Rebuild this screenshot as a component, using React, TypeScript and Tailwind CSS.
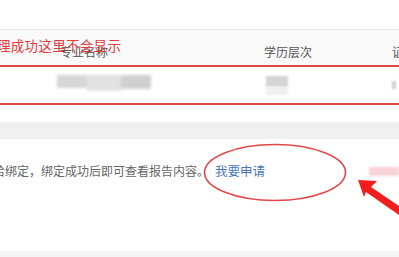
import React from 'react';

const font = { fontFamily: '"Noto Sans CJK SC", "Noto Sans", sans-serif' };

const App: React.FC = () => {
    return (
        <div className="relative w-[399px] h-[257px] overflow-hidden bg-white" style={font}>
            <div className="h-[29px]" />

            {/* table */}
            <div className="border-t border-[#e6e6e6]">
                <div className="flex items-center h-[35px] bg-[#f9f9f9] text-[12px] text-[#555] whitespace-nowrap">
                    <div className="w-[264px] shrink-0 pl-[60px] pt-[8px]">专业名称</div>
                    <div className="w-[128px] shrink-0 pt-[8px]">学历层次</div>
                    <div className="shrink-0 pt-[8px]">证书</div>
                </div>
                <div className="flex items-center h-[40px] border-y-2 border-[#e04848] bg-white">
                    <div className="w-[264px] shrink-0 pl-[57px]">
                        <div className="flex h-[20px] w-[94px] blur-[1.5px]">
                            <div className="w-[30px] h-[13px] bg-[#d6d6d6]" />
                            <div className="w-[34px] h-[16px] bg-[#e2e2e2]" />
                            <div className="w-[30px] h-[14px] bg-[#d0d0d0]" />
                        </div>
                    </div>
                    <div className="w-[128px] shrink-0 pl-[2px]">
                        <div className="w-[22px] h-[11px] bg-[#d4d4d4] blur-[1px]" />
                        <div className="w-[22px] h-[8px] bg-[#efefef] blur-[1px]" />
                    </div>
                    <div className="shrink-0">
                        <div className="w-[4px] h-[8px] bg-[#cfcfcf] blur-[1px]" />
                    </div>
                </div>
            </div>

            <div className="h-[17px]" />
            <div className="h-[17px] bg-[#f0f0f0]" />

            {/* message row */}
            <div className="flex items-center h-[64px] text-[12px] whitespace-nowrap">
                <span className="ml-[-7px] text-[#666]">给绑定，绑定成功后即可查看报告内容。</span>
                <span className="ml-[6px] text-[12.5px] text-[#4a78b8]">我要申请</span>
                <div className="ml-[104px] w-[30px] h-[9px] bg-[#f8d3d6] blur-[1px]" />
            </div>

            <div className="absolute left-0 right-0 bottom-0 h-[6px] bg-[#f5f5f5]" />

            {/* annotations */}
            <div className="absolute left-0 top-[35px] text-[13.5px] tracking-[0.3px] text-[#e43a3a] whitespace-nowrap ml-[-3px]">
                理成功这里不会显示
            </div>
            <svg className="absolute left-0 top-0" width="399" height="257" viewBox="0 0 399 257">
                <ellipse cx="275" cy="172.5" rx="70.5" ry="28" fill="none" stroke="#e04848" strokeWidth="1.6" />
                <polygon points="358,180 377,181 371,187 399,206 399,215 366,192 364,197" fill="#f21d1d" />
            </svg>
        </div>
    );
};

export default App;
